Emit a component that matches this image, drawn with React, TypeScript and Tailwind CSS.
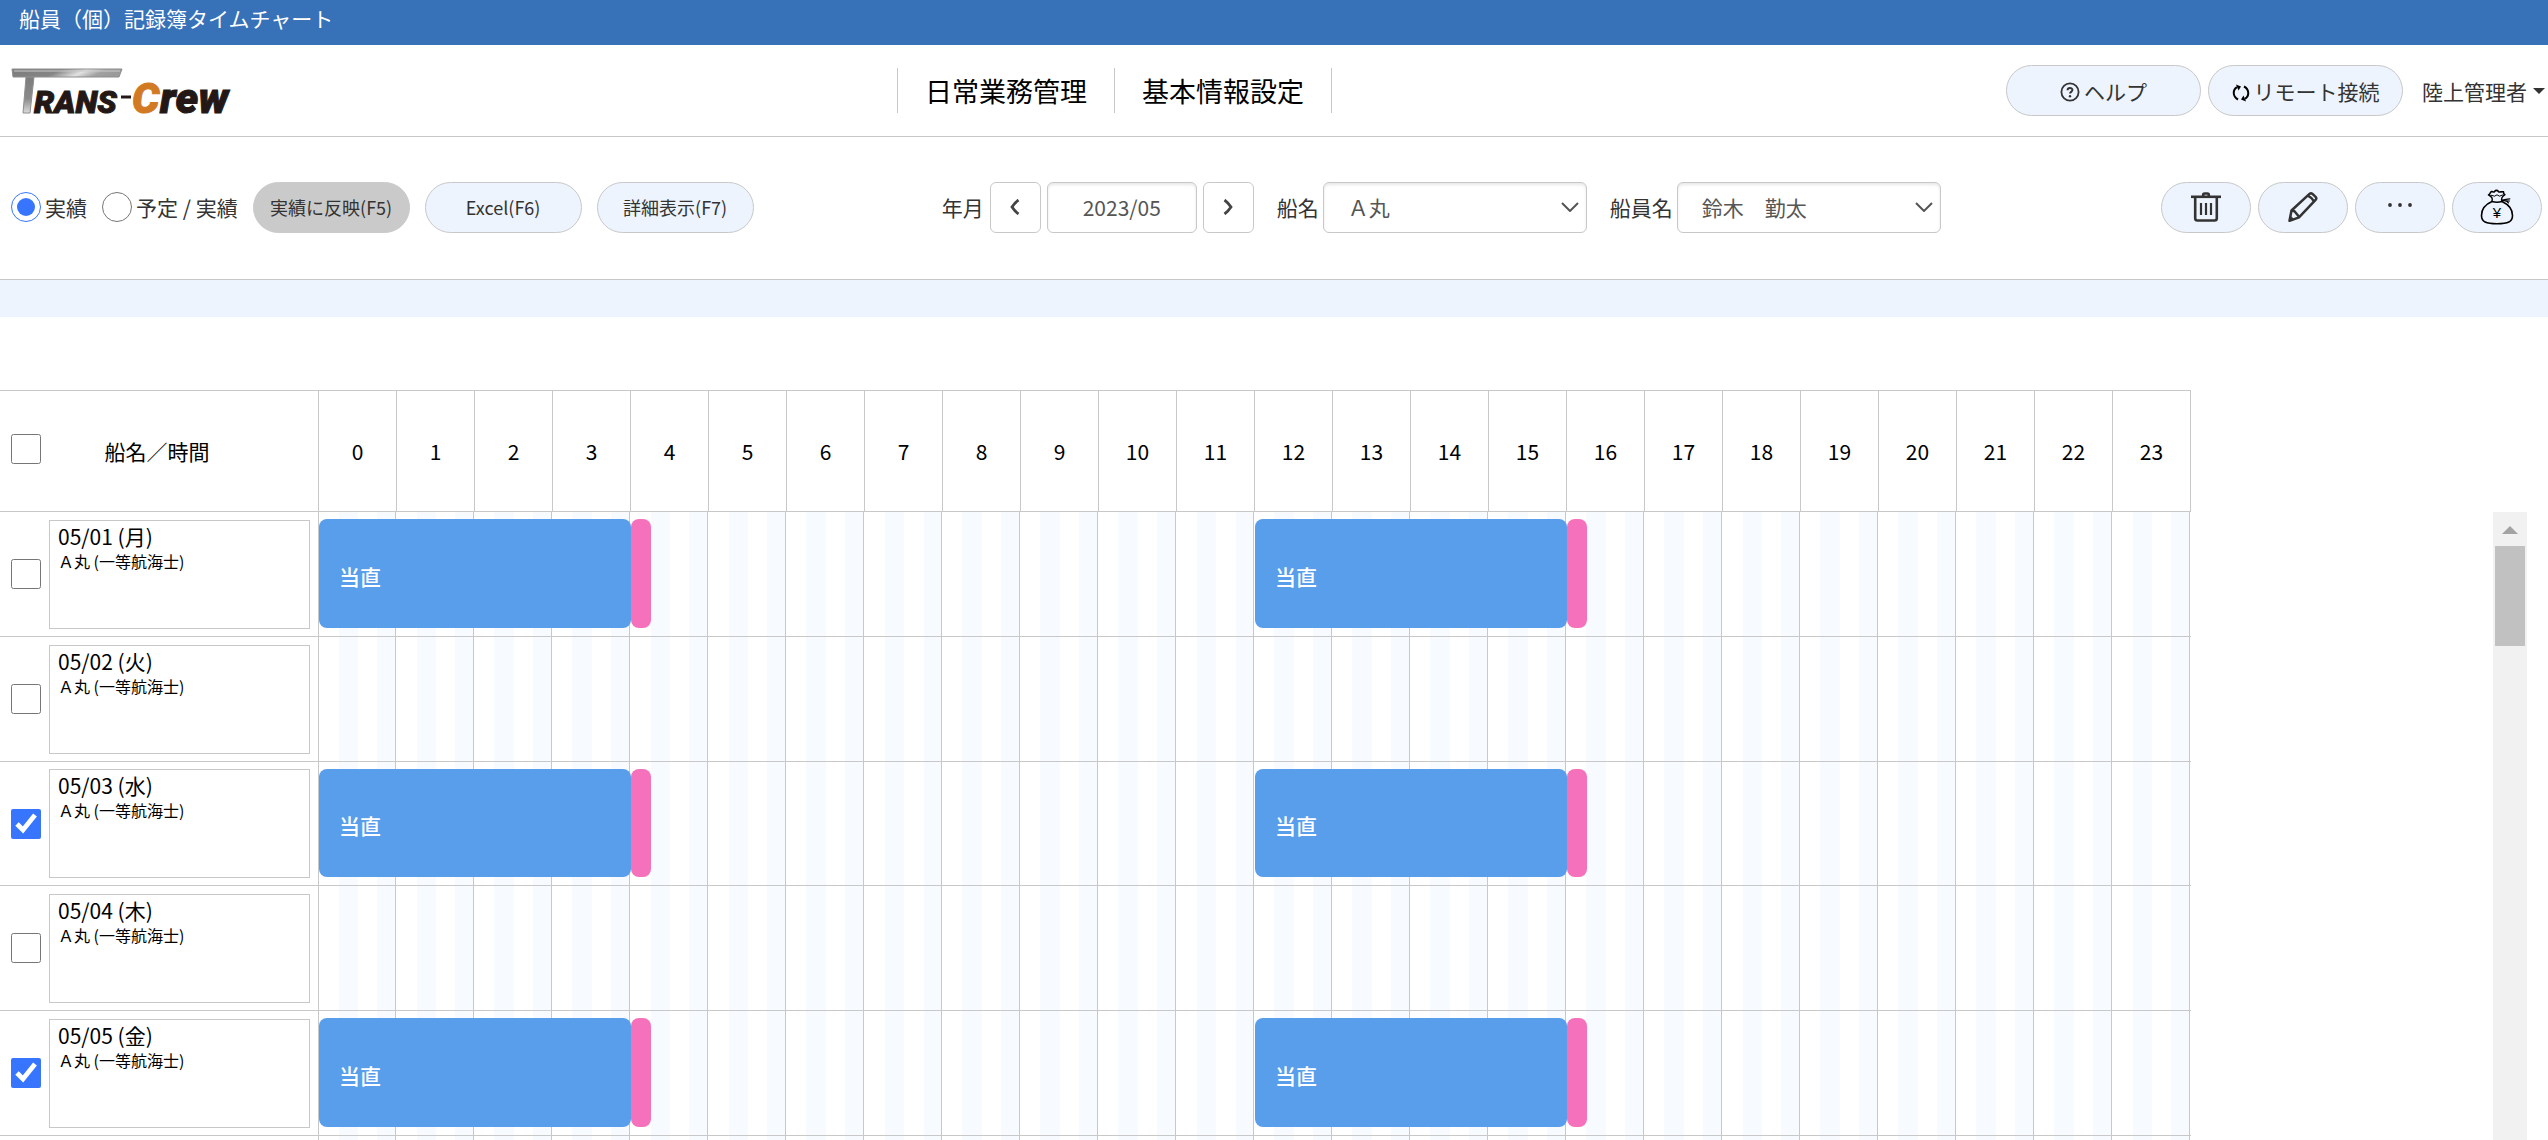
import { useState } from 'react'
import type { ReactNode } from 'react'

type Bar = { start: number; hours: number }
type Day = { date: string; crew: string; checked: boolean; bars: Bar[] }

const CREW = 'Ａ丸 (一等航海士)'
const WATCHES: Bar[] = [
  { start: 0, hours: 4 },
  { start: 12, hours: 4 },
]
const OVERTIME_HOURS = 0.25

const DAYS: Day[] = [
  { date: '05/01 (月)', crew: CREW, checked: false, bars: WATCHES },
  { date: '05/02 (火)', crew: CREW, checked: false, bars: [] },
  { date: '05/03 (水)', crew: CREW, checked: true, bars: WATCHES },
  { date: '05/04 (木)', crew: CREW, checked: false, bars: [] },
  { date: '05/05 (金)', crew: CREW, checked: true, bars: WATCHES },
]

const HOURS = Array.from({ length: 24 }, (_, i) => i)

// Quarter-hour stripes with the hour line near the right edge.
const HOUR_CELL =
  'relative border-b border-[#c8c8c8] p-0 bg-[linear-gradient(90deg,#fff_25%,#f7faff_25%,#f7faff_50%,#fff_50%,#fff_75%,#f7faff_75%,#f7faff_calc(100%_-_2px),#c8c8c8_calc(100%_-_2px),#c8c8c8_calc(100%_-_1px),#fff_calc(100%_-_1px))]'

function Logo() {
  return (
    <svg viewBox="0 0 231 60" className="h-[60px] w-[231px] overflow-visible" role="img" aria-label="TRANS-Crew">
      <defs>
        <linearGradient id="steel" x1="0" x2="1" y1="0" y2="0.15">
          <stop offset="0" stopColor="#7c7c7c" />
          <stop offset="0.45" stopColor="#858585" />
          <stop offset="0.68" stopColor="#e2e2e2" />
          <stop offset="0.85" stopColor="#a2a2a2" />
          <stop offset="1" stopColor="#9a9a9a" />
        </linearGradient>
        <linearGradient id="stem" x1="0" x2="0" y1="0" y2="1">
          <stop offset="0" stopColor="#7c7c7c" />
          <stop offset="0.6" stopColor="#8a8a8a" />
          <stop offset="1" stopColor="#dcdcdc" />
        </linearGradient>
      </defs>
      <path d="M26 16H34L30 52H23Z" fill="url(#stem)" stroke="#8e8e8e" />
      <path d="M12 8H122L119 16H13Z" fill="url(#steel)" stroke="#8e8e8e" />
      <path d="M14 10H120" stroke="#c9c9c9" />
      <g fontFamily="Roboto, sans-serif" fontWeight="900" fontStyle="italic">
        <text x="34" y="52" fontSize="32" fill="#231815" stroke="#231815">RANS</text>
        <path d="M121 36H131" stroke="#231815" strokeWidth="3" />
        <text x="132" y="52" fontSize="43" fill="#d27a23" stroke="#d27a23">C</text>
        <text x="160" y="52" fontSize="43" fill="#231815" stroke="#231815">rew</text>
      </g>
    </svg>
  )
}

function HelpIcon() {
  return (
    <svg viewBox="0 0 20 20" className="mt-0.5 size-5" fill="none" stroke="#333" aria-hidden="true">
      <circle cx="10" cy="10" r="8.600" strokeWidth="1.800" />
      <path d="M7.600 8.200C7.600 5.200 12.400 5.200 12.400 8.100C12.400 9.900 10 9.900 10 11.600" strokeWidth="2" />
      <circle cx="10" cy="14.200" r="1.200" fill="#333" stroke="none" />
    </svg>
  )
}

function SyncIcon() {
  return (
    <svg viewBox="0 0 18 20" className="mt-1 h-5 w-[18px]" fill="none" stroke="#000" strokeWidth="2" aria-hidden="true">
      <path d="M6 16.500C0.500 13.500 0.500 7 5 4.200" />
      <path d="M12 3.500C17.500 6.500 17.500 13 13 15.800" />
      <path d="M4 1.500L9 3.400L6.500 7.500Z" fill="#000" stroke="none" />
      <path d="M14 18.500L9 16.600L11.500 12.500Z" fill="#000" stroke="none" />
    </svg>
  )
}

function TrashIcon() {
  return (
    <svg viewBox="0 0 30 30" className="size-[30px]" fill="none" stroke="#333" strokeWidth="2.600" aria-hidden="true">
      <path d="M0 4.800H30" />
      <path d="M12.200 4.500V2.800Q12.200 1.500 13.500 1.500H16.500Q17.800 1.500 17.800 2.800V4.500" />
      <path d="M4.200 5V26.300Q4.200 28.500 6.500 28.500H23.500Q25.800 28.500 25.800 26.300V5" />
      <path d="M10 11V23M15 11V23M20 11V23" strokeWidth="2.200" />
    </svg>
  )
}

function PencilIcon() {
  return (
    <svg viewBox="0 0 30 30" className="size-[30px]" fill="none" stroke="#333" strokeWidth="2.500" strokeLinejoin="round" aria-hidden="true">
      <path d="M1.500 28.800L3.500 18.500L21.500 1.900Q23 0.700 24.500 1.900L27.600 4.800Q28.900 6.200 27.800 7.600L11 25.300Z" />
      <path d="M3.500 18.500L6.500 19.300L10.600 24.200L11 25.300" />
      <path d="M19.800 3.600Q23.500 5.200 26 9.400" />
      <path d="M1.500 28.800L2.500 24.300L5.800 27.300Z" fill="#333" strokeWidth="1" />
    </svg>
  )
}

function DotsIcon() {
  return (
    <svg viewBox="0 0 26 6" className="mb-1 h-1.5 w-[26px]" fill="#333" aria-hidden="true">
      <circle cx="3" cy="3" r="1.900" />
      <circle cx="13" cy="3" r="1.900" />
      <circle cx="23" cy="3" r="1.900" />
    </svg>
  )
}

function MoneyBagIcon() {
  return (
    <svg viewBox="0 0 34 36" className="h-9 w-[34px]" fill="none" stroke="#000" strokeWidth="1.600" strokeLinejoin="round" strokeLinecap="round" aria-hidden="true">
      <path d="M12 12.500C5 15.500 1.500 21 1.500 26.500C1.500 33 6 34.800 17 34.800C28 34.800 32.500 33 32.500 26.500C32.500 21 28.500 15.500 22 12.500" />
      <path d="M12 12.500C13 9.500 12.300 8 8.500 5.800C10 5.800 10 3 11.500 2.500C13 2.600 13.500 3.600 14.500 2.600Q16.500 0.200 18.500 2.600C19.500 3.600 21 2.400 23.500 2.800C23.800 4.500 23.200 5 24.800 5.600C21.500 8 21 9.500 22 12.500Q17 14 12 12.500Z" />
      <path d="M11 6.200L14.500 7.200L17 5.800L19.500 7.200L22.500 6" strokeWidth="1" />
      <path d="M22.500 11Q26 10 29.800 9.800M22.500 11.800Q26 10.800 28.500 13.800M22.500 11.500L29.500 12" strokeWidth="1.200" />
      <text x="17" y="29" textAnchor="middle" fontSize="15" fontFamily='"Liberation Sans", sans-serif' fill="#000" stroke="none">¥</text>
    </svg>
  )
}

function Chevron({ direction }: { direction: 'left' | 'right' }) {
  return (
    <svg viewBox="0 0 10 16" className="h-4 w-2.5" fill="none" stroke="#444" strokeWidth="2.800" aria-hidden="true">
      {direction === 'left' ? <path d="M8.500 1Q5 3.500 2 8Q5 12.500 8.500 15" /> : <path d="M1.500 1Q5 3.500 8 8Q5 12.500 1.500 15" />}
    </svg>
  )
}

function IconButton({ label, children }: { label: string; children: ReactNode }) {
  return (
    <button
      type="button"
      aria-label={label}
      className="flex h-[51px] w-[90px] items-center justify-center rounded-full border border-[#c8c8c8] bg-[#edf4fd]"
    >
      {children}
    </button>
  )
}

function SelectBox({ id, label, value }: { id: string; label: string; value: string }) {
  return (
    <div className="flex items-center gap-1">
      <label htmlFor={id}>{label}</label>
      <div className="relative">
        <select
          id={id}
          className="h-[51px] w-[264px] appearance-none rounded-md border border-[#c8c8c8] bg-white pl-6 text-[#555] shadow-[inset_0_2px_3px_#e8e8e8]"
        >
          <option>{value}</option>
        </select>
        <svg viewBox="0 0 18 10" className="pointer-events-none absolute top-5 right-2 h-2.5 w-[18px]" fill="none" stroke="#555" strokeWidth="2" aria-hidden="true">
          <path d="M1 1L9 9L17 1" />
        </svg>
      </div>
    </div>
  )
}

const TEXT_BUTTON = 'h-[51px] w-[157px] rounded-full border text-lg'
const STEP_BUTTON = 'flex size-[51px] items-center justify-center rounded-md border border-[#c8c8c8] bg-white'
const HEADER_BUTTON =
  'flex h-[51px] w-[195px] items-center justify-center gap-1 rounded-full border border-[#c8c8c8] bg-[#edf4fd]'

export default function App() {
  const [mode, setMode] = useState('actual')
  const [month, setMonth] = useState('2023/05')

  return (
    <div className="flex h-screen flex-col overflow-hidden bg-white font-['Noto_Sans_CJK_JP',sans-serif] text-[21px] leading-[30px] text-[#333]">
      <h1 className="h-[45px] shrink-0 bg-[#3771b8] px-[19px] pt-[3px] text-white">船員（個）記録簿タイムチャート</h1>

      <header className="flex h-[92px] shrink-0 items-center justify-between border-b border-[#c8c8c8] pr-[3px]">
        <Logo />
        <nav className="flex border-l border-[#c8c8c8] text-[27px] leading-[45px] text-black">
          <a href="#daily" className="border-r border-[#c8c8c8] px-[27px]">日常業務管理</a>
          <a href="#basic" className="border-r border-[#c8c8c8] px-[27px]">基本情報設定</a>
        </nav>
        <div className="flex items-center gap-[7px] pl-2">
          <button type="button" className={HEADER_BUTTON}>
            <HelpIcon />
            ヘルプ
          </button>
          <button type="button" className={HEADER_BUTTON}>
            <SyncIcon />
            リモート接続
          </button>
          <button type="button" className="flex items-center gap-1.5 pl-3">
            陸上管理者
            <svg viewBox="0 0 12 6" className="h-1.5 w-3" fill="#333" aria-hidden="true">
              <path d="M0 0H12L6 6Z" />
            </svg>
          </button>
        </div>
      </header>

      <div className="flex h-[143px] shrink-0 items-center justify-between border-b border-[#c8c8c8] pr-1.5 pb-0.5 pl-[11px]">
        <div className="flex items-center gap-[15px]">
          <label className="flex items-center gap-1">
            <input type="radio" name="mode" className="size-[30px] accent-[#3875ff]" checked={mode === 'actual'} onChange={() => setMode('actual')} />
            実績
          </label>
          <label className="flex items-center gap-1">
            <input type="radio" name="mode" className="size-[30px] accent-[#3875ff]" checked={mode === 'both'} onChange={() => setMode('both')} />
            予定 / 実績
          </label>
          <button type="button" className={`${TEXT_BUTTON} border-[#cacaca] bg-[#cacaca]`}>実績に反映(F5)</button>
          <button type="button" className={`${TEXT_BUTTON} border-[#c8c8c8] bg-[#edf4fd]`}>Excel(F6)</button>
          <button type="button" className={`${TEXT_BUTTON} border-[#c8c8c8] bg-[#edf4fd]`}>詳細表示(F7)</button>
        </div>

        <div className="flex items-center gap-[23px] pr-8">
          <div className="flex items-center gap-1.5">
            <label htmlFor="month">年月</label>
            <button type="button" aria-label="前月" className={STEP_BUTTON}>
              <Chevron direction="left" />
            </button>
            <input
              id="month"
              type="text"
              value={month}
              onChange={(e) => setMonth(e.target.value)}
              className="h-[51px] w-[150px] rounded-md border border-[#c8c8c8] text-center text-[#555] shadow-[inset_0_2px_3px_#e8e8e8]"
            />
            <button type="button" aria-label="翌月" className={STEP_BUTTON}>
              <Chevron direction="right" />
            </button>
          </div>
          <SelectBox id="ship" label="船名" value="Ａ丸" />
          <SelectBox id="crew" label="船員名" value="鈴木　勤太" />
        </div>

        <div className="flex gap-[7px]">
          <IconButton label="削除"><TrashIcon /></IconButton>
          <IconButton label="編集"><PencilIcon /></IconButton>
          <IconButton label="その他"><DotsIcon /></IconButton>
          <IconButton label="手当"><MoneyBagIcon /></IconButton>
        </div>
      </div>

      <div className="h-[37px] shrink-0 bg-[#edf4fd]" />

      <main className="mt-[73px] flex min-h-0 flex-1 items-start justify-between overflow-hidden pr-[21px] text-black">
        <table className="w-[calc(100%-336px)] table-fixed border-separate border-spacing-0 border-t border-[#c8c8c8]">
          <colgroup>
            <col className="w-[49px]" />
            <col className="w-[270px]" />
            {HOURS.map((h) => (
              <col key={h} />
            ))}
          </colgroup>
          <thead>
            <tr className="h-[121px]">
              <th colSpan={2} scope="col" className="relative border-r border-b border-[#c8c8c8] p-0 pr-1 font-normal">
                <input type="checkbox" aria-label="すべて選択" className="absolute top-[43px] left-[11px] size-[30px] accent-[#3875ff]" />
                船名／時間
              </th>
              {HOURS.map((h) => (
                <th key={h} scope="col" className="border-r border-b border-[#c8c8c8] p-0 font-normal">
                  {h}
                </th>
              ))}
            </tr>
          </thead>
          <tbody>
            {DAYS.map((day) => (
              <tr key={day.date} className="h-[125px] nth-3:h-[124px]">
                <td className="border-b border-[#c8c8c8] p-0 pl-[11px]">
                  <input type="checkbox" aria-label={day.date} defaultChecked={day.checked} className="block size-[30px] accent-[#3875ff]" />
                </td>
                <th scope="row" className="border-r border-b border-[#c8c8c8] p-0 pr-2 text-left font-normal">
                  <div className="h-[109px] border border-[#c8c8c8] px-2">
                    <p>{day.date}</p>
                    <p className="text-base leading-5">{day.crew}</p>
                  </div>
                </th>
                {HOURS.map((h) => {
                  const bar = day.bars.find((b) => b.start === h)
                  return (
                    <td key={h} className={HOUR_CELL}>
                      {bar && (
                        <div className="absolute top-[7px] bottom-2 left-0 z-10 flex" style={{ width: `${(bar.hours + OVERTIME_HOURS) * 100}%` }}>
                          <div className="flex flex-1 items-center rounded-lg bg-[#589eea] pt-1 pl-5 font-medium text-white">当直</div>
                          <div className="rounded-lg bg-[#f571bb]" style={{ width: `${(OVERTIME_HOURS / (bar.hours + OVERTIME_HOURS)) * 100}%` }} />
                        </div>
                      )}
                    </td>
                  )
                })}
              </tr>
            ))}
            <tr className="h-[125px]">
              <td className="border-b border-[#c8c8c8] p-0" />
              <td className="border-r border-b border-[#c8c8c8] p-0" />
              {HOURS.map((h) => (
                <td key={h} className={HOUR_CELL} />
              ))}
            </tr>
          </tbody>
        </table>

        <div className="mt-[122px] flex w-[34px] flex-col items-center self-stretch bg-[#f1f1f1]">
          <svg viewBox="0 0 34 34" className="size-[34px] shrink-0" fill="#a3a3a3" aria-hidden="true">
            <path d="M9 22H25L17 14Z" />
          </svg>
          <div className="h-[100px] w-[30px] shrink-0 bg-[#c1c1c1]" />
        </div>
      </main>
    </div>
  )
}
